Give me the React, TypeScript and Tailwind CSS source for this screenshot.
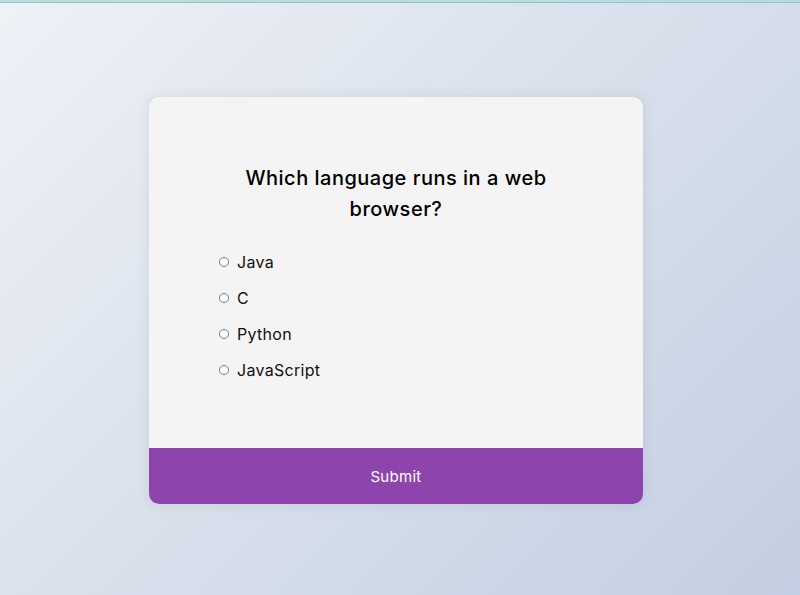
import { useState } from 'react'

const question = 'Which language runs in a web browser?'
const answers = ['Java', 'C', 'Python', 'JavaScript']

export default function App() {
  const [picked, setPicked] = useState<string | null>(null)

  return (
    <div className="flex h-[595px] w-[800px] flex-col overflow-hidden font-['Inter',sans-serif]">
      {/* thin top strip */}
      <div className="h-[2px] bg-[#b3dfe0]" />
      <div className="h-px bg-[#9bbfc2]" />

      <div className="flex flex-1 items-center justify-center bg-[linear-gradient(135deg,#eef1f6_0%,#c2cee1_100%)] pt-[2px] pr-[8px]">
        <div className="w-[494px] overflow-hidden rounded-[10px] bg-[#f4f4f4] shadow-[0_0_10px_2px_rgba(100,100,100,0.1)]">
          <div className="px-16 pt-[66px] pb-[60px]">
            <h2 className="text-center text-[20px] leading-[31px] font-medium tracking-[0.5px] text-black">
              {question}
            </h2>
            <ul className="mt-[19px]">
              {answers.map((a) => (
                <li key={a} className="flex h-9 items-center">
                  <label className="flex cursor-pointer items-center">
                    <input
                      type="radio"
                      name="answer"
                      checked={picked === a}
                      onChange={() => setPicked(a)}
                      className="ml-[6px] mr-[8px] h-[10px] w-[10px] appearance-none rounded-full border border-[#7a7a7a] bg-white checked:border-[3px] checked:border-[#8e44ad]"
                    />
                    <span className="text-[16px] tracking-[0.3px] text-[#111]">{a}</span>
                  </label>
                </li>
              ))}
            </ul>
          </div>
          <button className="block h-14 w-full bg-[#8e44ad] pt-[4px] text-[15px] tracking-[0.3px] text-white">
            Submit
          </button>
        </div>
      </div>
    </div>
  )
}
